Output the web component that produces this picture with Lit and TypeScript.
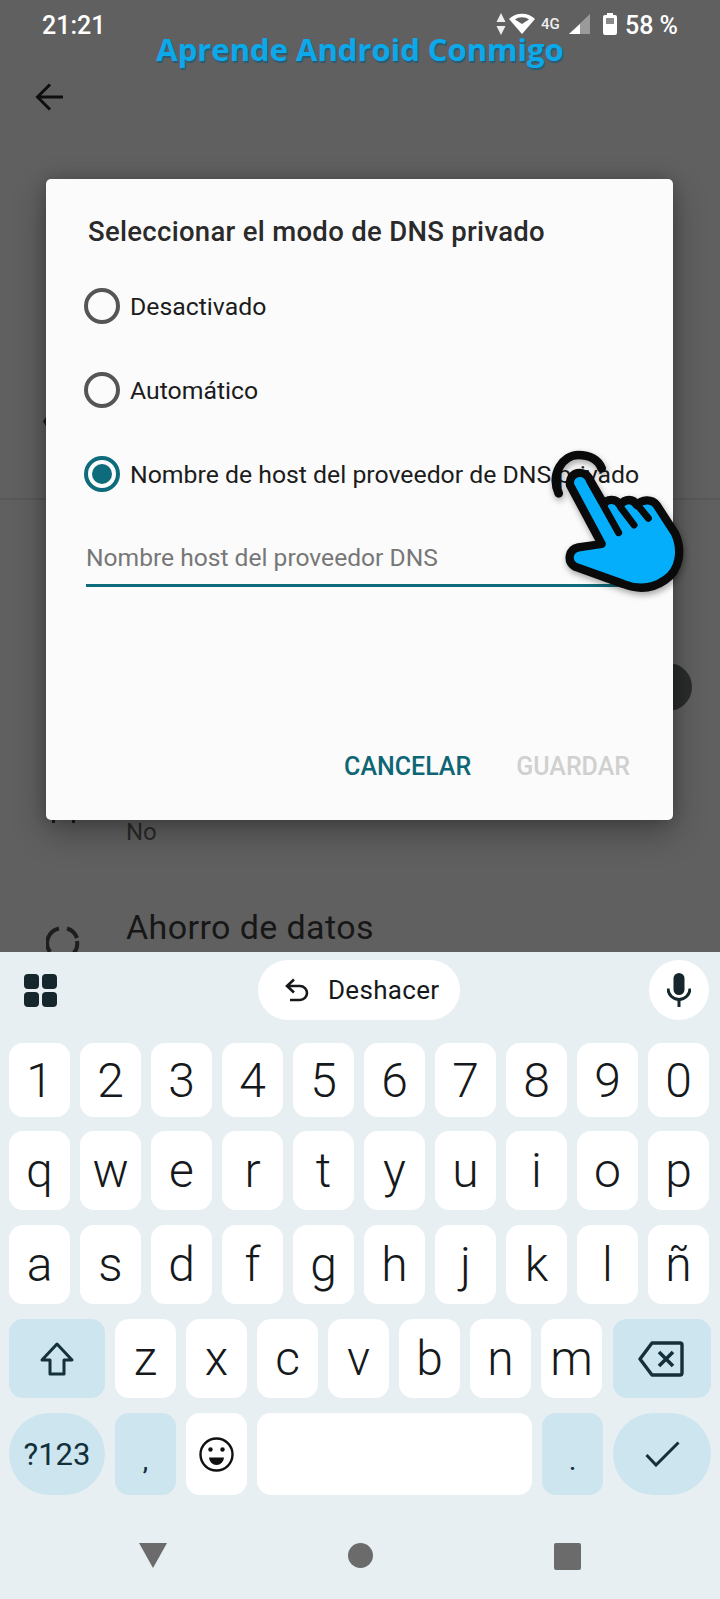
import { LitElement, html, css, svg } from "lit";
import { customElement } from "lit/decorators.js";

const row1 = ["1","2","3","4","5","6","7","8","9","0"];
const row2 = ["q","w","e","r","t","y","u","i","o","p"];
const row3 = ["a","s","d","f","g","h","j","k","l","ñ"];
const row4 = ["z","x","c","v","b","n","m"];

@customElement("app-root")
export class AppRoot extends LitElement {
  static styles = css`
    :host { display: block; width: 720px; height: 1599px; overflow: hidden; font-family: Roboto, "Noto Sans", sans-serif; }
    .screen { display: flex; flex-direction: column; height: 1599px; }

    .page { position: relative; height: 952px; flex: none; background: #606060; overflow: hidden; color: #1b1b1b; }
    .status { height: 56px; box-sizing: border-box; padding: 11px 42px 0 42px; display: flex; justify-content: space-between; align-items: flex-start; color: #fff; }
    .time { font-size: 25px; font-weight: 500; line-height: 30px; }
    .sicons { display: flex; align-items: flex-start; margin-top: 2px; }
    .sicons svg { display: block; flex: none; }
    .s-wifi { margin-left: 3px; }
    .s-4g { margin-left: 6px; width: 20px; font-size: 15px; line-height: 15px; margin-top: 4px; font-weight: 500; color: #eee; white-space: nowrap; }
    .s-sig { margin-left: 8px; margin-top: 1px; }
    .s-bat { margin-left: 13px; }
    .pct { font-size: 25px; font-weight: 500; line-height: 30px; margin-left: 8px; margin-top: -2px; white-space: nowrap; }
    .mark { position: absolute; left: 0; right: 0; top: 33px; text-align: center; font-family: "Open Sans", sans-serif; font-weight: 700; font-size: 31px; line-height: 32px; color: #0ba8ea; text-shadow: 1px 2px 1px #2c5a72; pointer-events: none; }
    .appbar { height: 80px; box-sizing: border-box; padding: 27px 0 0 35px; }
    .appbar svg { display: block; }
    .upper { height: 362px; box-sizing: border-box; padding: 281px 0 0 43px; }
    .upper svg { display: block; }
    .divider { height: 2px; background: #585858; }
    .switch-row { display: flex; justify-content: flex-end; padding: 163px 28px 0 0; }
    .thumb { width: 48px; height: 48px; border-radius: 50%; background: #2a2c2c; }
    .no-row { display: flex; margin-top: 106px; padding-left: 46px; gap: 46px; }
    .no-row svg { flex: none; }
    .no { font-size: 24px; line-height: 30px; color: #2a2a2a; }
    .saver { display: flex; margin-top: 60px; padding-left: 46px; gap: 46px; }
    .saver svg { flex: none; margin-top: 19px; }
    .saver-t { font-size: 34px; letter-spacing: .4px; line-height: 40px; color: #171717; white-space: nowrap; }

    .dialog { position: absolute; left: 46px; top: 179px; width: 627px; height: 641px; border-radius: 5px; background: #fbfbfb; box-shadow: 0 12px 34px rgba(0,0,0,.32), 0 0 14px rgba(0,0,0,.18); display: flex; flex-direction: column; color: #1c1c1c; }
    .title { padding: 37px 0 0 42px; font-size: 27.5px; letter-spacing: .3px; font-weight: 500; line-height: 32px; color: #2a2a2a; white-space: nowrap; }
    .opts { margin-top: 16px; display: flex; flex-direction: column; }
    .opt { height: 84px; display: flex; align-items: center; padding-left: 38px; gap: 10px; font-size: 24.8px; white-space: nowrap; }
    .radio { width: 36px; height: 36px; box-sizing: border-box; border-radius: 50%; border: 4px solid #555; flex: none; display: flex; align-items: center; justify-content: center; }
    .radio.on { border-color: #0e6b7b; }
    .radio.on i { display: block; width: 20px; height: 20px; border-radius: 50%; background: #0e6b7b; }
    .input { margin: 0 36px 0 40px; padding: 27px 0 11px 0; line-height: 30px; font-size: 24.6px; color: #777; border-bottom: 3px solid #0e6b7b; white-space: nowrap; }
    .btns { margin-top: auto; display: flex; justify-content: flex-end; gap: 45px; padding: 0 43px 38px 0; font-size: 25px; font-weight: 500; line-height: 30px; }
    .cancel { color: #0e6675; }
    .save { color: #d0d0d0; }
    .hand { position: absolute; left: 500px; top: 430px; filter: drop-shadow(1px 3px 3px rgba(0,0,0,.35)); }

    .kbd { flex: 1; background: #e7eff3; display: flex; flex-direction: column; }
    .sugg { height: 60px; margin-top: 8px; padding: 0 11px 0 24px; display: flex; align-items: center; }
    .chip { width: 202px; height: 60px; margin-left: 201px; border-radius: 30px; background: #fff; display: flex; align-items: center; box-sizing: border-box; padding-left: 27px; gap: 19px; font-size: 26px; letter-spacing: .3px; color: #16191b; }
    .micb { margin-left: auto; width: 60px; height: 60px; border-radius: 50%; background: #fff; display: flex; align-items: center; justify-content: center; }
    .rows { margin-top: 23px; display: flex; flex-direction: column; padding: 0 9px; gap: 15px; }
    .row { display: flex; gap: 10px; height: 79px; }
    .row.first { height: 74px; margin-bottom: -1px; }
    .row.last { height: 82px; }
    .k { flex: none; width: 61px; border-radius: 14px; background: #fff; display: flex; align-items: center; justify-content: center; font-size: 48px; font-weight: 300; color: #16191b; }
    .act { background: #cde5ee; }
    .wide { width: 96px; }
    .wider { width: 98px; }
    .grow { flex: 1; width: auto; }
    .bksp { margin-left: 1px; box-sizing: border-box; padding-right: 3px; }
    .pill { border-radius: 42px; }
    .sym { font-size: 31px; font-weight: 400; color: #12303c; }
    .low { font-size: 24px; align-items: flex-end; padding-bottom: 19px; box-sizing: border-box; color: #12303c; font-weight: 500; }
    .nav { padding: 48px 139px 0; display: flex; justify-content: space-between; align-items: flex-start; }
    .nav svg { display: block; }
  `;

  private hand() {
    const sil = "M210,165 C205,125 255,115 270,150 L312,222 C320,205 350,205 360,225 C375,205 400,205 410,225 C425,208 455,205 470,225 L525,310 C548,360 540,420 495,450 C455,478 410,478 370,462 L225,410 C200,395 205,358 235,352 L305,342 Z";
    return html`<svg class="hand" width="220" height="180" viewBox="0 0 660 540" fill="none" stroke-linecap="round" stroke-linejoin="round">
      ${svg`<path d="M176,190 C150,130 190,75 235,75 C270,75 295,90 305,115" stroke="#0a0a0a" stroke-width="26"/>
      <path d="${sil}" fill="#04aefb" stroke="#0a0a0a" stroke-width="25"/>
      <path d="M270,155 L356,308 M362,232 L402,285 M418,232 L445,265" stroke="#0a0a0a" stroke-width="21"/>`}
    </svg>`;
  }

  render() {
    return html`<div class="screen">
      <div class="page">
        <div class="status">
          <div class="time">21:21</div>
          <div class="sicons">
            <svg width="10" height="22" viewBox="0 0 10 22" fill="#eee"><path d="M5 0 9.5 9H.5zM5 22 .5 13h9z"/></svg>
            <svg class="s-wifi" width="26" height="21" viewBox="0 0 26 21"><path d="M13 21 0 6C7-1 19-1 26 6z" fill="#fff"/><path d="M13 11 6 6.5c4-3 10-3 14 0z" fill="#606060"/></svg>
            <div class="s-4g">4G</div>
            <svg class="s-sig" width="21" height="20" viewBox="0 0 21 20"><path d="M21 0V20H0z" fill="#9a9a9a"/><path d="M11 10V20H0z" fill="#fff"/></svg>
            <svg class="s-bat" width="14" height="22" viewBox="0 0 14 22"><path d="M4 0h6v2h2a2 2 0 0 1 2 2v16a2 2 0 0 1-2 2H2a2 2 0 0 1-2-2V4a2 2 0 0 1 2-2h2z" fill="#fff"/><rect x="3" y="5" width="8" height="6" fill="#8a8a8a"/></svg>
            <div class="pct">58 %</div>
          </div>
        </div>
        <div class="mark">Aprende Android Conmigo</div>
        <div class="appbar">
          <svg width="28" height="28" viewBox="0 0 28 28" fill="none" stroke="#0e0e0e" stroke-width="3"><path d="M28 14H3M15 1.5 2.5 14 15 26.5"/></svg>
        </div>
        <div class="upper"><svg width="3" height="9" viewBox="0 0 3 9"><path d="M3 0V9L0 4.5z" fill="#1b1b1b"/></svg></div>
        <div class="divider"></div>
        <div class="switch-row"><div class="thumb"></div></div>
        <div class="no-row">
          <svg width="34" height="8" viewBox="0 0 34 8" fill="#1b1b1b"><rect x="6" y="3" width="3" height="3"/><rect x="26" y="3" width="3" height="3"/></svg>
          <div class="no">No</div>
        </div>
        <div class="saver">
          <svg width="34" height="34" viewBox="0 0 34 34" fill="none" stroke="#1e1e1e" stroke-width="4"><path d="M13 2.5A15 15 0 0 0 4 26M21 2.5A15 15 0 0 1 31 12"/><path d="M31 15A15 15 0 0 1 26 29M23 31A15 15 0 0 1 9 30"/></svg>
          <div class="saver-t">Ahorro de datos</div>
        </div>

        <div class="dialog">
          <div class="title">Seleccionar el modo de DNS privado</div>
          <div class="opts">
            <div class="opt"><span class="radio"></span>Desactivado</div>
            <div class="opt"><span class="radio"></span>Automático</div>
            <div class="opt"><span class="radio on"><i></i></span>Nombre de host del proveedor de DNS privado</div>
          </div>
          <div class="input">Nombre host del proveedor DNS</div>
          <div class="btns"><span class="cancel">CANCELAR</span><span class="save">GUARDAR</span></div>
        </div>
        ${this.hand()}
      </div>

      <div class="kbd">
        <div class="sugg">
          <svg width="33" height="33" viewBox="0 0 33 33" fill="#15262d"><rect width="15" height="15" rx="4"/><rect x="18" width="15" height="15" rx="4"/><rect y="18" width="15" height="15" rx="4"/><rect x="18" y="18" width="15" height="15" rx="4"/></svg>
          <div class="chip">
            <svg width="24" height="24" viewBox="0 0 24 24" fill="none" stroke="#16191b" stroke-width="2.6"><path d="M9 1.5 2 8l7 6.5M2.5 8H15a7 7 0 0 1 7 7v0a7 7 0 0 1-7 7H5"/></svg>
            <span>Deshacer</span>
          </div>
          <div class="micb">
            <svg width="24" height="34" viewBox="0 0 24 34" fill="#15262d"><rect x="6.5" y="0" width="11" height="22" rx="5.5"/><path d="M1 15.5a11 11 0 0 0 22 0" fill="none" stroke="#15262d" stroke-width="3"/><rect x="10.5" y="26" width="3" height="8"/></svg>
          </div>
        </div>
        <div class="rows">
          <div class="row first">${row1.map(k => html`<div class="k">${k}</div>`)}</div>
          <div class="row">${row2.map(k => html`<div class="k">${k}</div>`)}</div>
          <div class="row">${row3.map(k => html`<div class="k">${k}</div>`)}</div>
          <div class="row">
            <div class="k act wide"><svg width="34" height="34" viewBox="0 0 34 34" fill="none" stroke="#15303b" stroke-width="3" stroke-linejoin="round"><path d="M17 2 32 18H24V32H10V18H2z"/></svg></div>
            ${row4.map(k => html`<div class="k">${k}</div>`)}
            <div class="k act grow bksp"><svg width="46" height="36" viewBox="0 0 46 36" fill="none" stroke="#15303b" stroke-width="3.4" stroke-linejoin="round"><path d="M14 2H42a2 2 0 0 1 2 2V32a2 2 0 0 1-2 2H14L2 18z"/><path d="M21 11 35 25M35 11 21 25" stroke-width="3.6"/></svg></div>
          </div>
          <div class="row last">
            <div class="k act wide pill sym">?123</div>
            <div class="k act low">,</div>
            <div class="k"><svg width="35" height="35" viewBox="0 0 35 35" fill="none" stroke="#111" stroke-width="2.4"><circle cx="17.5" cy="17.5" r="16"/><circle cx="11.5" cy="12.5" r="2.2" fill="#111" stroke="none"/><circle cx="23.5" cy="12.5" r="2.2" fill="#111" stroke="none"/><path d="M10 20.5H25A7.5 7.5 0 0 1 10 20.5z" fill="#111" stroke="none"/></svg></div>
            <div class="k grow"></div>
            <div class="k act low">.</div>
            <div class="k act wider pill"><svg width="35" height="26" viewBox="0 0 35 26" fill="none" stroke="#15303b" stroke-width="3"><path d="M1.5 14 11 24 33.5 1.5"/></svg></div>
          </div>
        </div>
        <div class="nav">
          <svg width="28" height="25" viewBox="0 0 28 25" fill="#6b6b6b"><path d="M0 0H28L14 25z"/></svg>
          <svg width="25" height="25" viewBox="0 0 25 25" fill="#6b6b6b"><circle cx="12.5" cy="12.5" r="12.5"/></svg>
          <svg width="27" height="27" viewBox="0 0 27 27" fill="#6b6b6b"><rect width="27" height="27" rx="2"/></svg>
        </div>
      </div>
    </div>`;
  }
}
